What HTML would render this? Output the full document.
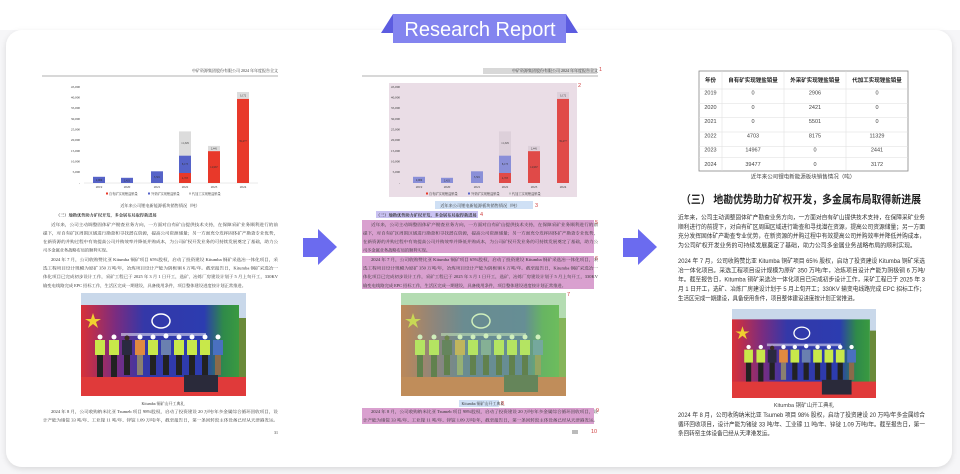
<!DOCTYPE html>
<html><head><meta charset="utf-8"><style>
html,body{margin:0;padding:0;background:#fff;}
svg{display:block;}
.s{font-family:"Liberation Serif","Noto Serif CJK SC",serif;fill:#333;}
.a{font-family:"Liberation Sans","Noto Sans CJK SC",sans-serif;fill:#333;}
</style></head><body>
<svg width="960" height="474" viewBox="0 0 960 474" xmlns="http://www.w3.org/2000/svg">
<defs>
<filter id="sh" x="-5%" y="-5%" width="110%" height="115%"><feDropShadow dx="0" dy="2" stdDeviation="3" flood-color="#000" flood-opacity="0.12"/></filter>
<linearGradient id="ban" x1="0" x2="1" y1="0" y2="0"><stop offset="0" stop-color="#d83038"/><stop offset="0.22" stop-color="#7a2c80"/><stop offset="0.4" stop-color="#3438a8"/><stop offset="0.78" stop-color="#2c3cb0"/><stop offset="0.9" stop-color="#2f8a4a"/><stop offset="1" stop-color="#3a9a40"/></linearGradient>
<symbol id="photo" viewBox="0 0 165 103" preserveAspectRatio="none">
<rect width="165" height="103" fill="#c9d8ea"/>
<rect y="12" width="158" height="78" fill="url(#ban)"/>
<rect x="158" y="25" width="7" height="60" fill="#6a8a3a"/>
<polygon points="12,20 14,26 20,26 15,29 17,35 12,31 7,35 9,29 4,26 10,26" fill="#f0d030"/>
<ellipse cx="80" cy="28" rx="9" ry="7" fill="none" stroke="#fff" stroke-width="1.5"/>
<rect x="40" y="40" width="85" height="3" fill="#dde" opacity="0.6"/>
<rect x="0" y="84" width="165" height="19" fill="#e03a3a"/>
<rect x="103" y="82" width="34" height="17" fill="#2a2a3a"/>
<g fill="#222">
<rect x="16" y="62" width="6" height="22"/><rect x="30" y="62" width="6" height="22"/><rect x="43" y="62" width="6" height="20"/><rect x="56" y="62" width="6" height="20" fill="#8a8070"/><rect x="69" y="62" width="6" height="20"/><rect x="82" y="62" width="6" height="20"/><rect x="95" y="62" width="6" height="20"/><rect x="108" y="62" width="6" height="20"/><rect x="121" y="62" width="6" height="20"/><rect x="134" y="62" width="6" height="20" fill="#8a6a4a"/>
</g>
<g fill="#c8e84a">
<rect x="14" y="47" width="10" height="15"/><rect x="28" y="47" width="10" height="15"/><rect x="41" y="47" width="10" height="15" fill="#2a2a40"/><rect x="54" y="47" width="10" height="15" fill="#e08a40"/><rect x="67" y="47" width="10" height="15"/><rect x="80" y="47" width="10" height="15" fill="#6a80b0"/><rect x="93" y="47" width="10" height="15"/><rect x="106" y="47" width="10" height="15"/><rect x="119" y="47" width="10" height="15"/><rect x="132" y="47" width="10" height="15" fill="#4a70c0"/>
</g>
<g fill="#fff"><circle cx="19" cy="44" r="2.5"/><circle cx="33" cy="44" r="2.5"/><circle cx="46" cy="45" r="2.5" fill="#3a2a20"/><circle cx="59" cy="44" r="2.5"/><circle cx="72" cy="44" r="2.5"/><circle cx="85" cy="43" r="2.5"/><circle cx="98" cy="44" r="2.5"/><circle cx="111" cy="44" r="2.5"/><circle cx="124" cy="44" r="2.5"/><circle cx="137" cy="44" r="2.5"/></g>
</symbol>
</defs>

<rect x="0" y="0" width="960" height="474" fill="#f6f6f8"/>
<rect x="0" y="0" width="960" height="30" fill="#fff"/>
<rect x="6" y="30" width="946" height="437" rx="16" fill="#fff" filter="url(#sh)"/>

<polygon points="381,33 393,14 393,33" fill="#5c5ce0"/>
<polygon points="566,14 578,33 566,33" fill="#5c5ce0"/>
<rect x="393" y="14" width="173" height="29" fill="#8384ef"/>
<text x="480" y="36" text-anchor="middle" font-family="Liberation Sans, sans-serif" font-size="20" fill="#fff">Research Report</text>

<polygon points="303,238 318,238 318,229 337,247 318,265 318,257 303,257" fill="#6b6bef"/>
<polygon points="623,238 638,238 638,229 657,247 638,265 638,257 623,257" fill="#6b6bef"/>

<rect x="483" y="68" width="114" height="6" fill="#d8d8d8"/>
<rect x="389" y="83" width="188" height="114" fill="#eadde6"/>
<rect x="435" y="201" width="98" height="8" fill="#cfe0f5"/>
<rect x="376" y="211" width="102" height="7" fill="#c9c2f2"/>
<rect x="362" y="220" width="232" height="33" fill="#d9a0cf"/>
<rect x="362" y="256" width="232" height="33" fill="#d9a0cf"/>
<rect x="362" y="408" width="232" height="16" fill="#d9a0cf"/>
<rect x="459" y="400" width="40" height="7" fill="#cfe0f5"/>
<g font-family="Liberation Sans, sans-serif" font-size="5.5" fill="#d04040">
<text x="599" y="71">1</text><text x="578" y="87">2</text><text x="535" y="207">3</text><text x="480" y="216">4</text><text x="595" y="224">5</text><text x="595" y="260">6</text><text x="567" y="296">7</text><text x="501" y="405">8</text><text x="596" y="412">9</text><text x="591" y="433">10</text>
</g>

<g>
<text class="s" x="278" y="72" font-size="4" text-anchor="end">中矿资源集团股份有限公司 2024 年年度报告全文</text>
<line x1="42" y1="76" x2="278" y2="76" stroke="#999" stroke-width="0.8"/>
<g class="s" font-size="3.3" text-anchor="end" fill="#555">
<text x="80" y="88">45,000</text><text x="80" y="98.5">40,000</text><text x="80" y="109">35,000</text><text x="80" y="120">30,000</text><text x="80" y="130.5">25,000</text><text x="80" y="141">20,000</text><text x="80" y="152">15,000</text><text x="80" y="162.5">10,000</text><text x="80" y="173">5,000</text><text x="80" y="184">-</text>
</g>
<line x1="84" y1="183" x2="258" y2="183" stroke="#ccc" stroke-width="0.4"/>
<rect x="93" y="176.8" width="12" height="6.2" fill="#5663c8"/>
<rect x="121" y="177.8" width="12" height="5.2" fill="#5663c8"/>
<rect x="151" y="171.3" width="12" height="11.7" fill="#5663c8"/>
<rect x="179" y="173" width="12" height="10" fill="#e8392a"/>
<rect x="179" y="155.6" width="12" height="17.4" fill="#5663c8"/>
<rect x="179" y="131.4" width="12" height="24.2" fill="#dcdcdc"/>
<rect x="208" y="151.1" width="12" height="31.9" fill="#e8392a"/>
<rect x="208" y="145.9" width="12" height="5.2" fill="#dcdcdc"/>
<rect x="237" y="98.8" width="12" height="84.2" fill="#e8392a"/>
<rect x="237" y="92" width="12" height="6.8" fill="#dcdcdc"/>
<g class="s" font-size="2.8" text-anchor="middle" fill="#fff">
<text x="99" y="181">2,906</text><text x="127" y="181.5">2,421</text><text x="157" y="178">5,501</text><text x="185" y="179">4,703</text><text x="185" y="165">8,175</text><text x="214" y="168">14,967</text><text x="243" y="142">39,477</text>
</g>
<g class="s" font-size="2.8" text-anchor="middle" fill="#444">
<text x="185" y="144">11,329</text><text x="214" y="149.5">2,441</text><text x="243" y="96.5">3,172</text>
</g>
<g class="s" font-size="3.3" text-anchor="middle" fill="#444">
<text x="99" y="188">2019</text><text x="127" y="188">2020</text><text x="157" y="188">2021</text><text x="185" y="188">2022</text><text x="214" y="188">2023</text><text x="243" y="188">2024</text>
</g>
<g class="s" font-size="3.2" fill="#444">
<rect x="106" y="192.5" width="2" height="2" fill="#e8392a"/><text x="109" y="195">自有矿实现锂盐销量</text>
<rect x="148" y="192.5" width="2" height="2" fill="#5663c8"/><text x="151" y="195">外采矿实现锂盐销量</text>
<rect x="189" y="192.5" width="2" height="2" fill="#bbb"/><text x="192" y="195">代加工实现锂盐销量</text>
</g>
<text class="s" x="160" y="207" font-size="4.2" text-anchor="middle">近年来公司锂电新能源板块销售情况（吨）</text>
<text class="s" x="56" y="216.5" font-size="4.2" font-weight="bold" fill="#111">（三）地勘优势助力矿权开发，多金属布局取得新进展</text>
<g class="s" font-size="4.2">
<text x="51" y="226" textLength="227" lengthAdjust="spacingAndGlyphs">近年来，公司主动调整固体矿产勘查业务方向，一方面对自有矿山提供技术支持，在保障采矿业务顺利进行的前</text>
<text x="43" y="234.5" textLength="235" lengthAdjust="spacingAndGlyphs">提下，对自有矿区周围区域进行勘查和寻找潜在资源，提高公司资源储量；另一方面充分发挥固体矿产勘查专业优势，</text>
<text x="43" y="243" textLength="235" lengthAdjust="spacingAndGlyphs">在新资源的并购过程中有效提高公司并购效率并降低并购成本，为公司矿权开发业务的可持续发展奠定了基础，助力公</text>
<text x="43" y="251.5">司多金属业务战略布局的顺利实现。</text>
<text x="51" y="261" textLength="227" lengthAdjust="spacingAndGlyphs">2024 年 7 月，公司收购赞比亚 Kitumba 铜矿项目 65%股权，启动了投资建设 Kitumba 铜矿采选冶一体化项目，采</text>
<text x="43" y="269.5" textLength="235" lengthAdjust="spacingAndGlyphs">选工程项目设计规模为原矿 350 万吨/年，冶炼项目设计产能为阴极铜 6 万吨/年。截至报告日，Kitumba 铜矿采选冶一</text>
<text x="43" y="278" textLength="235" lengthAdjust="spacingAndGlyphs">体化项目已完成初步设计工作，采矿工程已于 2025 年 3 月 1 日开工，选矿、冶炼厂房建设计划于 5 月上旬开工，330KV</text>
<text x="43" y="287" textLength="203" lengthAdjust="spacingAndGlyphs">输变电线路完成 EPC 招标工作，生活区完成一期建设，具备使用条件，项目整体建设进度按计划正常推进。</text>
<text x="51" y="413" textLength="227" lengthAdjust="spacingAndGlyphs">2024 年 8 月，公司收购纳米比亚 Tsumeb 项目 98%股权，启动了投资建设 20 万吨/年多金属综合循环回收项目，设</text>
<text x="43" y="421.5" textLength="235" lengthAdjust="spacingAndGlyphs">计产能为锗锭 33 吨/年、工业镓 11 吨/年、锌锭 1.09 万吨/年，截至报告日，第一条回转窑主体设备已经从天津港发运。</text>
</g>
<use href="#photo" x="81" y="293" width="165" height="103"/>
<text class="s" x="163" y="405" font-size="4" text-anchor="middle">Kitumba 铜矿山开工典礼</text>
</g>
<text class="s" x="274" y="434" font-size="4">31</text>

<g transform="translate(320,0)">
<text class="s" x="278" y="72" font-size="4" text-anchor="end">中矿资源集团股份有限公司 2024 年年度报告全文</text>
<line x1="42" y1="76" x2="278" y2="76" stroke="#999" stroke-width="0.8"/>
<g class="s" font-size="3.3" text-anchor="end" fill="#555">
<text x="80" y="88">45,000</text><text x="80" y="98.5">40,000</text><text x="80" y="109">35,000</text><text x="80" y="120">30,000</text><text x="80" y="130.5">25,000</text><text x="80" y="141">20,000</text><text x="80" y="152">15,000</text><text x="80" y="162.5">10,000</text><text x="80" y="173">5,000</text><text x="80" y="184">-</text>
</g>
<rect x="93" y="176.8" width="12" height="6.2" fill="#8a8fd8"/>
<rect x="121" y="177.8" width="12" height="5.2" fill="#8a8fd8"/>
<rect x="151" y="171.3" width="12" height="11.7" fill="#8a8fd8"/>
<rect x="179" y="173" width="12" height="10" fill="#e04a48"/>
<rect x="179" y="155.6" width="12" height="17.4" fill="#8a8fd8"/>
<rect x="179" y="131.4" width="12" height="24.2" fill="#ddd0da"/>
<rect x="208" y="151.1" width="12" height="31.9" fill="#e04a48"/>
<rect x="208" y="145.9" width="12" height="5.2" fill="#ddd0da"/>
<rect x="237" y="98.8" width="12" height="84.2" fill="#e04a48"/>
<rect x="237" y="92" width="12" height="6.8" fill="#ddd0da"/>
<g class="s" font-size="2.8" text-anchor="middle" fill="#fff">
<text x="99" y="181">2,906</text><text x="127" y="181.5">2,421</text><text x="157" y="178">5,501</text><text x="185" y="179">4,703</text><text x="185" y="165">8,175</text><text x="214" y="168">14,967</text><text x="243" y="142">39,477</text>
</g>
<g class="s" font-size="2.8" text-anchor="middle" fill="#444">
<text x="185" y="144">11,329</text><text x="214" y="149.5">2,441</text><text x="243" y="96.5">3,172</text>
</g>
<g class="s" font-size="3.3" text-anchor="middle" fill="#444">
<text x="99" y="188">2019</text><text x="127" y="188">2020</text><text x="157" y="188">2021</text><text x="185" y="188">2022</text><text x="214" y="188">2023</text><text x="243" y="188">2024</text>
</g>
<g class="s" font-size="3.2" fill="#444">
<rect x="106" y="192.5" width="2" height="2" fill="#e8392a"/><text x="109" y="195">自有矿实现锂盐销量</text>
<rect x="148" y="192.5" width="2" height="2" fill="#5663c8"/><text x="151" y="195">外采矿实现锂盐销量</text>
<rect x="189" y="192.5" width="2" height="2" fill="#bbb"/><text x="192" y="195">代加工实现锂盐销量</text>
</g>
<text class="s" x="160" y="207" font-size="4.2" text-anchor="middle">近年来公司锂电新能源板块销售情况（吨）</text>
<text class="s" x="56" y="216.5" font-size="4.2" font-weight="bold" fill="#111">（三）地勘优势助力矿权开发，多金属布局取得新进展</text>
<g class="s" font-size="4.2">
<text x="51" y="226" textLength="227" lengthAdjust="spacingAndGlyphs">近年来，公司主动调整固体矿产勘查业务方向，一方面对自有矿山提供技术支持，在保障采矿业务顺利进行的前</text>
<text x="43" y="234.5" textLength="235" lengthAdjust="spacingAndGlyphs">提下，对自有矿区周围区域进行勘查和寻找潜在资源，提高公司资源储量；另一方面充分发挥固体矿产勘查专业优势，</text>
<text x="43" y="243" textLength="235" lengthAdjust="spacingAndGlyphs">在新资源的并购过程中有效提高公司并购效率并降低并购成本，为公司矿权开发业务的可持续发展奠定了基础，助力公</text>
<text x="43" y="251.5">司多金属业务战略布局的顺利实现。</text>
<text x="51" y="261" textLength="227" lengthAdjust="spacingAndGlyphs">2024 年 7 月，公司收购赞比亚 Kitumba 铜矿项目 65%股权，启动了投资建设 Kitumba 铜矿采选冶一体化项目，采</text>
<text x="43" y="269.5" textLength="235" lengthAdjust="spacingAndGlyphs">选工程项目设计规模为原矿 350 万吨/年，冶炼项目设计产能为阴极铜 6 万吨/年。截至报告日，Kitumba 铜矿采选冶一</text>
<text x="43" y="278" textLength="235" lengthAdjust="spacingAndGlyphs">体化项目已完成初步设计工作，采矿工程已于 2025 年 3 月 1 日开工，选矿、冶炼厂房建设计划于 5 月上旬开工，330KV</text>
<text x="43" y="287" textLength="203" lengthAdjust="spacingAndGlyphs">输变电线路完成 EPC 招标工作，生活区完成一期建设，具备使用条件，项目整体建设进度按计划正常推进。</text>
<text x="51" y="413" textLength="227" lengthAdjust="spacingAndGlyphs">2024 年 8 月，公司收购纳米比亚 Tsumeb 项目 98%股权，启动了投资建设 20 万吨/年多金属综合循环回收项目，设</text>
<text x="43" y="421.5" textLength="235" lengthAdjust="spacingAndGlyphs">计产能为锗锭 33 吨/年、工业镓 11 吨/年、锌锭 1.09 万吨/年，截至报告日，第一条回转窑主体设备已经从天津港发运。</text>
</g>
<use href="#photo" x="81" y="293" width="165" height="103"/>
<rect x="81" y="293" width="165" height="103" fill="#9fe07a" opacity="0.5"/>
<text class="s" x="163" y="405" font-size="4" text-anchor="middle">Kitumba 铜矿山开工典礼</text>
<rect x="252" y="430" width="6" height="4" fill="#bbb"/>
</g>

<g class="a">
<rect x="699" y="71" width="209" height="100" fill="#fff" stroke="#888" stroke-width="0.8"/>
<g stroke="#ddd" stroke-width="0.5">
<line x1="699" y1="89" x2="908" y2="89"/><line x1="699" y1="103.3" x2="908" y2="103.3"/><line x1="699" y1="117.7" x2="908" y2="117.7"/><line x1="699" y1="132" x2="908" y2="132"/><line x1="699" y1="146.3" x2="908" y2="146.3"/><line x1="699" y1="157.5" x2="908" y2="157.5"/>
<line x1="722" y1="71" x2="722" y2="171"/><line x1="784" y1="71" x2="784" y2="171"/><line x1="846" y1="71" x2="846" y2="171"/>
</g>
<g font-size="5.5" font-weight="bold" text-anchor="middle" fill="#222">
<text x="710.5" y="82">年份</text><text x="753" y="82">自有矿实现锂盐销量</text><text x="815" y="82">外采矿实现锂盐销量</text><text x="877" y="82">代加工实现锂盐销量</text>
</g>
<g font-size="5.5" text-anchor="middle" fill="#444">
<text x="710.5" y="94.5">2019</text><text x="753" y="94.5">0</text><text x="815" y="94.5">2906</text><text x="877" y="94.5">0</text>
<text x="710.5" y="108.8">2020</text><text x="753" y="108.8">0</text><text x="815" y="108.8">2421</text><text x="877" y="108.8">0</text>
<text x="710.5" y="123">2021</text><text x="753" y="123">0</text><text x="815" y="123">5501</text><text x="877" y="123">0</text>
<text x="710.5" y="137.3">2022</text><text x="753" y="137.3">4703</text><text x="815" y="137.3">8175</text><text x="877" y="137.3">11329</text>
<text x="710.5" y="151.6">2023</text><text x="753" y="151.6">14967</text><text x="815" y="151.6">0</text><text x="877" y="151.6">2441</text>
<text x="710.5" y="166">2024</text><text x="753" y="166">39477</text><text x="815" y="166">0</text><text x="877" y="166">3172</text>
</g>
<text x="803" y="178.5" font-size="5.5" text-anchor="middle" fill="#444">近年来公司锂电新能源板块销售情况（吨）</text>
<text x="681" y="203" font-size="11" font-weight="bold" fill="#222" textLength="240" lengthAdjust="spacingAndGlyphs">（三） 地勘优势助力矿权开发，多金属布局取得新进展</text>
<g font-size="6" fill="#333">
<text x="678" y="219.5" textLength="247" lengthAdjust="spacingAndGlyphs">近年来，公司主动调整固体矿产勘查业务方向，一方面对自有矿山提供技术支持，在保障采矿业务</text>
<text x="678" y="228.8" textLength="247" lengthAdjust="spacingAndGlyphs">顺利进行的前提下，对自有矿区周围区域进行勘查和寻找潜在资源，提高公司资源储量；另一方面</text>
<text x="678" y="238" textLength="247" lengthAdjust="spacingAndGlyphs">充分发挥固体矿产勘查专业优势，在新资源的并购过程中有效提高公司并购效率并降低并购成本，</text>
<text x="678" y="247.3" textLength="238" lengthAdjust="spacingAndGlyphs">为公司矿权开发业务的可持续发展奠定了基础，助力公司多金属业务战略布局的顺利实现。</text>
<text x="678" y="263" textLength="247" lengthAdjust="spacingAndGlyphs">2024 年 7 月，公司收购赞比亚 Kitumba 铜矿项目 65% 股权，启动了投资建设 Kitumba 铜矿采选</text>
<text x="678" y="272.3" textLength="247" lengthAdjust="spacingAndGlyphs">冶一体化项目。采选工程项目设计规模为原矿 350 万吨/年，冶炼项目设计产能为阴极铜 6 万吨/</text>
<text x="678" y="281.6" textLength="247" lengthAdjust="spacingAndGlyphs">年。截至报告日，Kitumba 铜矿采选冶一体化项目已完成初步设计工作，采矿工程已于 2025 年 3</text>
<text x="678" y="291" textLength="247" lengthAdjust="spacingAndGlyphs">月 1 日开工，选矿、冶炼厂房建设计划于 5 月上旬开工；330KV 输变电线路完成 EPC 招标工作；</text>
<text x="678" y="300.3" textLength="180" lengthAdjust="spacingAndGlyphs">生活区完成一期建设，具备使用条件，项目整体建设进度按计划正常推进。</text>
<text x="678" y="417" textLength="247" lengthAdjust="spacingAndGlyphs">2024 年 8 月，公司收购纳米比亚 Tsumeb 项目 98% 股权，启动了投资建设 20 万吨/年多金属综合</text>
<text x="678" y="426.3" textLength="247" lengthAdjust="spacingAndGlyphs">循环回收项目，设计产能为锗锭 33 吨/年、工业镓 11 吨/年、锌锭 1.09 万吨/年。截至报告日，第一</text>
<text x="678" y="435.6" textLength="95" lengthAdjust="spacingAndGlyphs">条回转窑主体设备已经从天津港发运。</text>
</g>
<use href="#photo" x="732" y="309" width="144" height="89"/>
<text x="804" y="407" font-size="5.5" text-anchor="middle" fill="#444">Kitumba 铜矿山开工典礼</text>
</g>
</svg>
</body></html>
